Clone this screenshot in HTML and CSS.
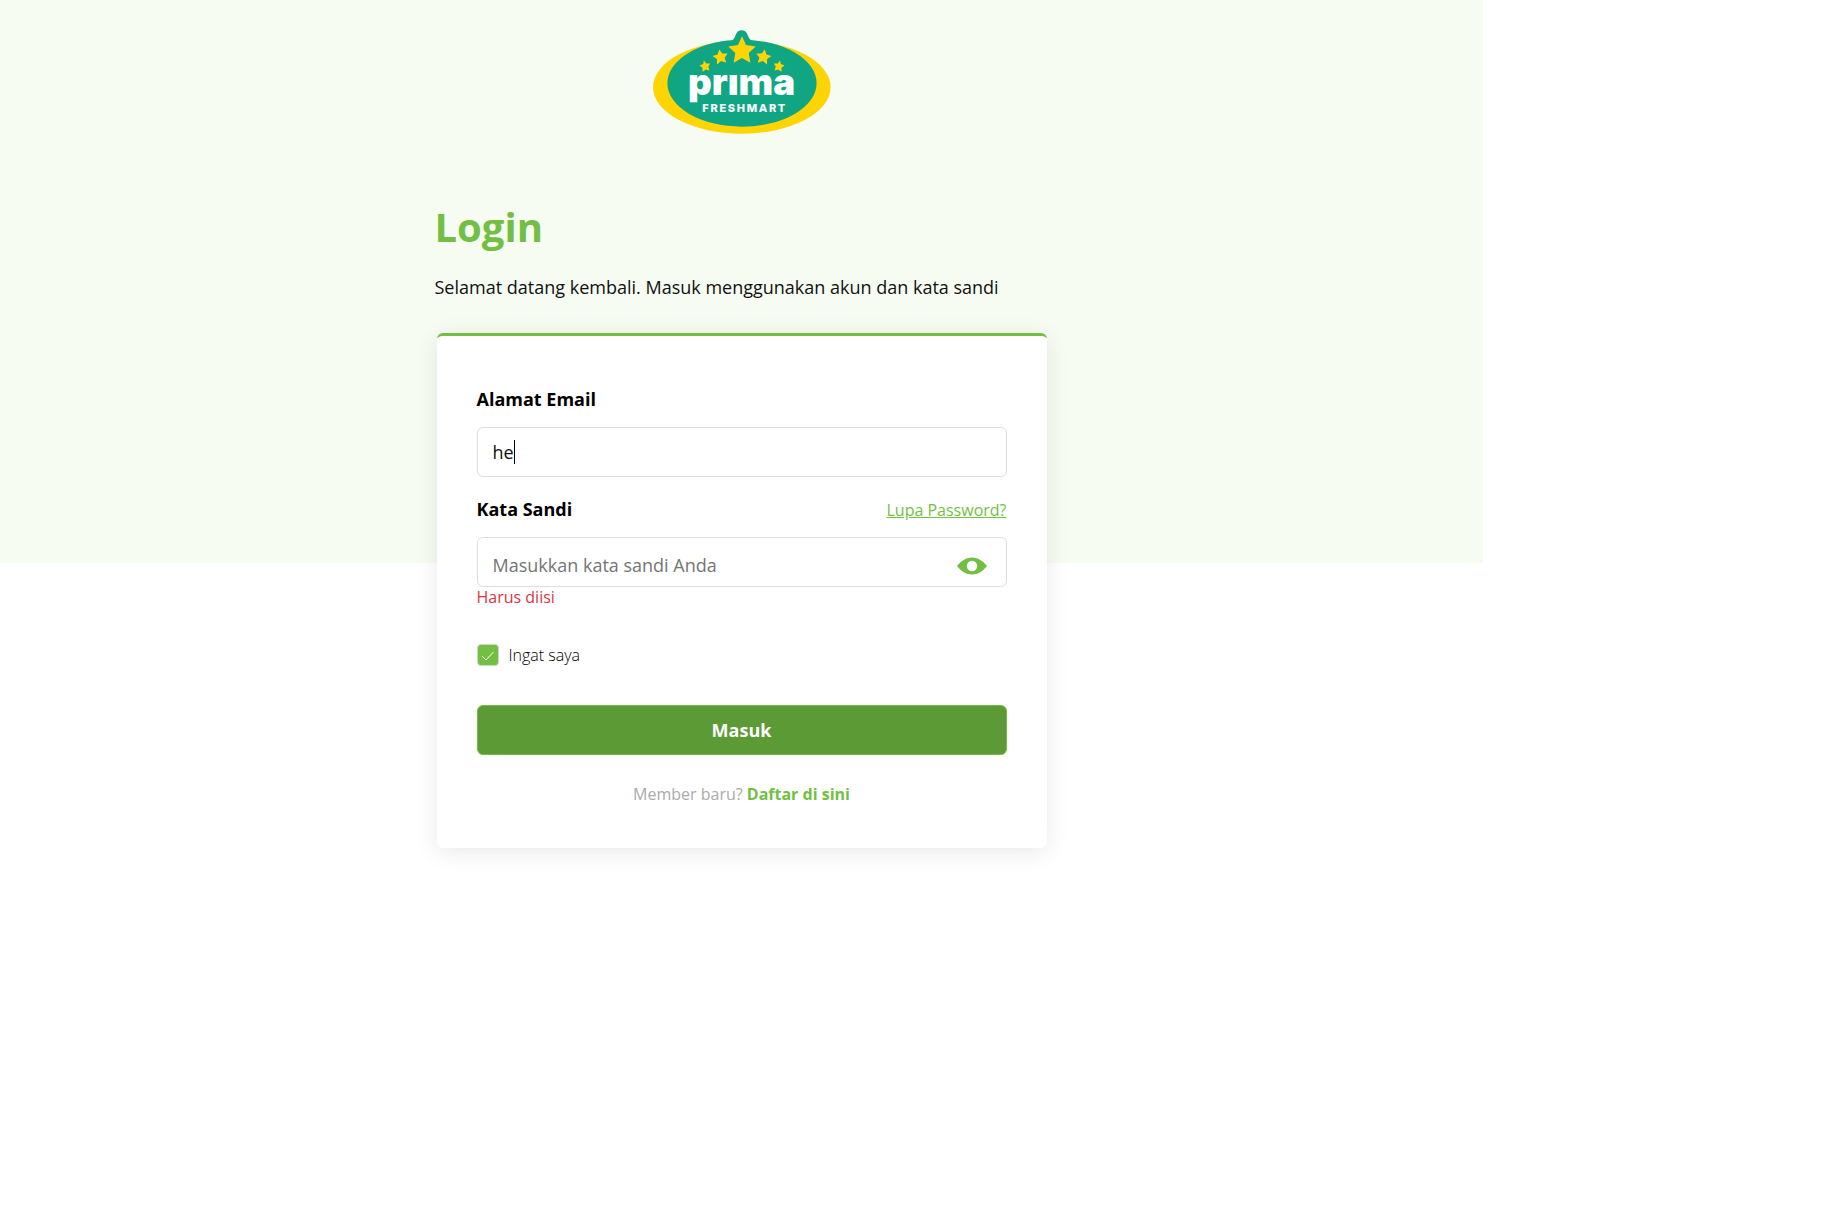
FILE: index.html
```html
<!DOCTYPE html>
<html lang="id">
<head>
<meta charset="utf-8">
<meta name="viewport" content="width=device-width, initial-scale=1">
<title>Login - Prima Freshmart</title>
<link rel="stylesheet" href="styles.css">
</head>
<body>
<main class="page">
  <div class="column">
    <svg class="logo" viewBox="39 29 532 311" role="img" aria-label="Prima Freshmart">
      <ellipse class="logo-yellow" cx="304.500" cy="200" rx="265.500" ry="139"/>
      <ellipse class="logo-green" cx="305" cy="188" rx="223" ry="130"/>
      <path class="logo-green" d="M262 66C278 62 281 56 286 44C290 34 296 30 304 30S318 34 322 44C327 56 331 62 347 66Z"/>
      <g class="logo-yellow">
        <path d="M305 48L317 74L346 78L325 98L330 127L305 113L280 127L285 98L264 78L293 74Z"/>
        <path d="M237 87L246 99L262 99L253 112L258 127L243 122L230 132L230 116L217 107L232 102Z"/>
        <path d="M373 87L378 102L393 107L380 116L380 132L367 122L352 127L357 112L348 99L364 99Z"/>
        <path d="M191 120L198 129L210 129L204 139L208 150L197 147L187 154L187 142L178 135L189 131Z"/>
        <path d="M419 120L421 131L432 135L423 142L423 154L413 147L402 150L406 139L400 129L412 129Z"/>
      </g>
      <text class="logo-name" x="304" y="223">prıma</text>
      <text class="logo-sub" x="313" y="273">FRESHMART</text>
    </svg>

    <h1 class="title">Login</h1>
    <p class="intro">Selamat datang kembali. Masuk menggunakan akun dan kata sandi</p>

    <form class="card">
      <div class="label-row">
        <label class="label" for="email">Alamat Email</label>
      </div>
      <div class="field">
        <input class="input" id="email" type="text" value="he">
        <span class="caret"></span>
      </div>

      <div class="label-row label-row-next">
        <label class="label" for="password">Kata Sandi</label>
        <a class="forgot" href="#">Lupa Password?</a>
      </div>
      <div class="field">
        <input class="input input-password" id="password" type="password" placeholder="Masukkan kata sandi Anda">
        <button class="reveal" type="button" aria-label="Tampilkan kata sandi">
          <svg class="eye" viewBox="0 0 30 18"><path fill-rule="evenodd" d="M0 9C4 4 9 .500 15 .500S26 4 30 9C26 14 21 17.500 15 17.500S4 14 0 9ZM15 3.800A5.200 5.200 0 1 0 15 14.200A5.200 5.200 0 1 0 15 3.800Z"/></svg>
        </button>
      </div>
      <p class="error">Harus diisi</p>

      <label class="remember">
        <span class="tick">
          <input class="tick-box" type="checkbox" checked>
          <svg class="tick-mark" viewBox="0 0 22 22"><path d="M5 12L9 16L16.500 8"/></svg>
        </span>
        Ingat saya
      </label>

      <button class="submit" type="submit">Masuk</button>
      <p class="signup">Member baru? <a class="signup-link" href="#">Daftar di sini</a></p>
    </form>
  </div>
</main>
</body>
</html>
```

FILE: styles.css
```css
* {
  box-sizing: border-box;
}

body {
  margin: 0;
  background: #fff;
  color: #111;
  font-family: "Open Sans", "Noto Sans", sans-serif;
  font-size: 18px;
  line-height: 28px;
}

.page {
  min-height: 100vh;
  margin-right: 345px;
  padding: 30px 0;
  background: linear-gradient(#f6fcf2, #f6fcf2) no-repeat 0 0 / 100% 46vh;
}

.column {
  max-width: 614px;
  margin: 0 auto;
}

.logo {
  display: block;
  width: 178px;
  height: 104px;
  margin: 0 auto;
}

.logo-yellow { fill: #ffd403; }
.logo-green { fill: #11a683; }

.logo-name,
.logo-sub {
  fill: #fff;
  font-family: Inter, sans-serif;
  font-weight: 900;
  text-anchor: middle;
}

.logo-name { font-size: 110px; }
.logo-sub {
  font-size: 33px;
  font-weight: 800;
  letter-spacing: 5px;
}

.title {
  margin: 63px 0 16px;
  color: #72bf44;
  font-size: 40px;
  font-weight: 700;
  line-height: 60px;
}

.intro {
  margin: 0 0 32px;
}

.card {
  margin: 0 2px;
  padding: 49px 40px 44px;
  border-top: 3px solid #72bf44;
  border-radius: 6px;
  background: #fff;
  box-shadow: 0 4px 24px rgba(0, 0, 0, 0.09);
}

.label-row {
  display: flex;
  align-items: baseline;
  justify-content: space-between;
  margin-bottom: 14px;
}

.label-row-next { margin-top: 18px; }

.label {
  color: #000;
  font-weight: 700;
}

.forgot {
  color: #72bf44;
  font-size: 16px;
  line-height: 20px;
}

.field { position: relative; }

.input {
  display: block;
  width: 100%;
  height: 50px;
  padding: 0 15px;
  border: 1px solid #dedede;
  border-radius: 6px;
  background: #fff;
  color: #111;
  font: inherit;
}

.input-password { padding: 6px 64px 0 15px; }

.input::placeholder {
  color: #757575;
  opacity: 1;
}

.caret {
  position: absolute;
  top: 13px;
  left: 37px;
  width: 1px;
  height: 24px;
  background: #000;
}

.reveal {
  position: absolute;
  top: 16px;
  right: 20px;
  display: block;
  padding: 4px 0 0;
  border: 0;
  background: none;
}

.eye {
  display: block;
  width: 30px;
  height: 18px;
  fill: #72bf44;
}

.error {
  margin: 0 0 37px;
  color: #dc3545;
  font-size: 16px;
  line-height: 20px;
}

.remember {
  display: flex;
  align-items: center;
  gap: 10px;
  width: fit-content;
  color: #000;
  font-size: 16px;
  font-weight: 300;
  line-height: 20px;
}

.tick {
  display: grid;
  width: 22px;
  height: 22px;
}

.tick-box,
.tick-mark {
  grid-area: 1 / 1;
  width: 22px;
  height: 22px;
}

.tick-box {
  appearance: none;
  margin: 0;
  border: 1px solid #d0d8cb;
  border-radius: 4px;
  background: #72bf44;
}

.tick-mark {
  z-index: 1;
  fill: none;
  stroke: #fff;
  stroke-width: 1;
  pointer-events: none;
}

.submit {
  display: block;
  width: 100%;
  height: 50px;
  margin: 39px 0 29px;
  padding: 0;
  border: 1px solid #72bf44;
  border-radius: 6px;
  background: #5b9a35;
  color: #fff;
  font: inherit;
  font-weight: 700;
}

.signup {
  margin: 0;
  color: #aaa;
  font-size: 16px;
  line-height: 20px;
  text-align: center;
}

.signup-link {
  color: #72bf44;
  font-weight: 700;
  text-decoration: none;
}
```
